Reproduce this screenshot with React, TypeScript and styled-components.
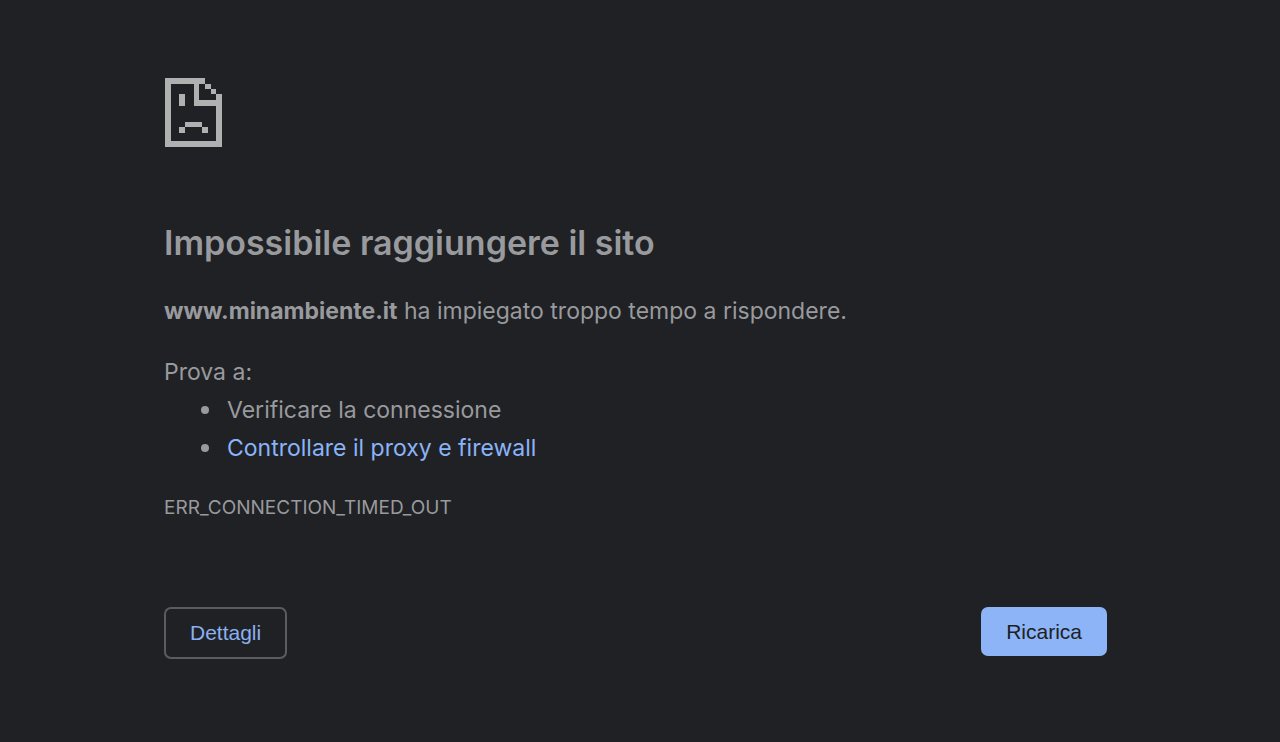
import React from "react";
import styled, { createGlobalStyle } from "styled-components";

const GlobalStyle = createGlobalStyle`
  * {
    box-sizing: border-box;
  }

  body {
    margin: 0;
    background: #202124;
    color: #999a9e;
    font-family: Inter, "Liberation Sans", sans-serif;
    font-size: 23px;
    line-height: 38px;
  }
`;

const Page = styled.main`
  max-width: 1280px;
  margin: 0 auto;
  padding: 78px 173px 84px 164px;
`;

const SadPageIcon = styled.svg`
  display: block;
  width: 58px;
  height: 69px;
  fill: #b0b0b0;
`;

const Title = styled.h1`
  margin: 72px 0 25px;
  font-size: 34px;
  font-weight: 600;
  line-height: 48px;
`;

const Paragraph = styled.p`
  margin: 0;
`;

const Suggestions = styled.section`
  margin-top: 23px;
`;

const SuggestionList = styled.ul`
  margin: 0;
  padding-left: 37px;
  list-style: none;
`;

const Suggestion = styled.li`
  display: flex;
  align-items: center;
  gap: 18px;

  &::before {
    content: "";
    width: 8px;
    height: 8px;
    border-radius: 50%;
    background: currentColor;
  }
`;

const ProxyLink = styled.a`
  color: #8ab4f8;
  text-decoration: none;
`;

const ErrorCode = styled.p`
  margin: 22px 0 0;
  font-size: 19px;
`;

const Actions = styled.div`
  display: flex;
  justify-content: space-between;
  align-items: flex-start;
  margin-top: 80px;
`;

const Button = styled.button<{ $primary?: boolean }>`
  padding: ${(p) => (p.$primary ? "12px 25px" : "12px 24px")};
  border: ${(p) => (p.$primary ? "0" : "2px solid #5b5c60")};
  border-radius: 7px;
  background: ${(p) => (p.$primary ? "#8cb4f7" : "transparent")};
  color: ${(p) => (p.$primary ? "#202124" : "#8ab0f0")};
  font-family: "Liberation Sans", Arial, sans-serif;
  font-size: 21px;
  line-height: ${(p) => (p.$primary ? "25px" : "24px")};
  cursor: pointer;
`;

export default function App() {
  return (
    <>
      <GlobalStyle />
      <Page>
        <SadPageIcon viewBox="-3 0 174 207" shapeRendering="crispEdges" aria-hidden="true">
          <path d="M0 0H120V17H103V66H154V49H171V207H0ZM17 17V189H154V83H86V17Z" fillRule="evenodd" />
          <path d="M120 17H137V33H120ZM137 33H154V49H137Z" />
          <path d="M42 49H59V83H42ZM59 131H111V148H59ZM42 148H59V164H42ZM111 148H128V164H111Z" />
        </SadPageIcon>
        <Title>Impossibile raggiungere il sito</Title>
        <Paragraph>
          <strong>www.minambiente.it</strong> ha impiegato troppo tempo a rispondere.
        </Paragraph>
        <Suggestions>
          <Paragraph>Prova a:</Paragraph>
          <SuggestionList>
            <Suggestion>Verificare la connessione</Suggestion>
            <Suggestion>
              <ProxyLink href="#proxy">Controllare il proxy e firewall</ProxyLink>
            </Suggestion>
          </SuggestionList>
        </Suggestions>
        <ErrorCode>ERR_CONNECTION_TIMED_OUT</ErrorCode>
        <Actions>
          <Button type="button">Dettagli</Button>
          <Button type="button" $primary>
            Ricarica
          </Button>
        </Actions>
      </Page>
    </>
  );
}
